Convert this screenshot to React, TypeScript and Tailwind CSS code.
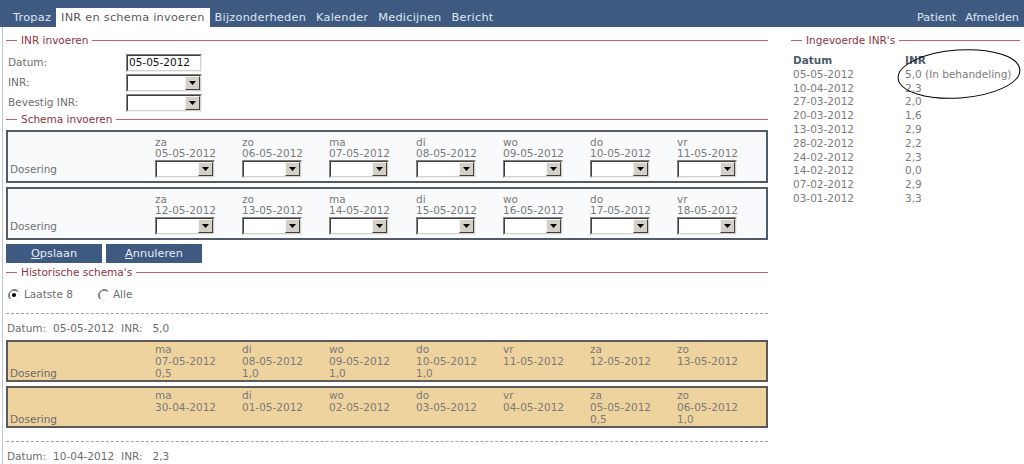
import React from 'react'

const NAV_LEFT = ['Tropaz', 'INR en schema invoeren', 'Bijzonderheden', 'Kalender', 'Medicijnen', 'Bericht']

const WEEK1 = [
  ['za', '05-05-2012'], ['zo', '06-05-2012'], ['ma', '07-05-2012'], ['di', '08-05-2012'],
  ['wo', '09-05-2012'], ['do', '10-05-2012'], ['vr', '11-05-2012'],
]
const WEEK2 = [
  ['za', '12-05-2012'], ['zo', '13-05-2012'], ['ma', '14-05-2012'], ['di', '15-05-2012'],
  ['wo', '16-05-2012'], ['do', '17-05-2012'], ['vr', '18-05-2012'],
]

const HIST1 = [
  ['ma', '07-05-2012', '0,5'], ['di', '08-05-2012', '1,0'], ['wo', '09-05-2012', '1,0'], ['do', '10-05-2012', '1,0'],
  ['vr', '11-05-2012', ''], ['za', '12-05-2012', ''], ['zo', '13-05-2012', ''],
]
const HIST2 = [
  ['ma', '30-04-2012', ''], ['di', '01-05-2012', ''], ['wo', '02-05-2012', ''], ['do', '03-05-2012', ''],
  ['vr', '04-05-2012', ''], ['za', '05-05-2012', '0,5'], ['zo', '06-05-2012', '1,0'],
]

const INRS = [
  ['05-05-2012', '5,0 (In behandeling)'], ['10-04-2012', '2,3'], ['27-03-2012', '2,0'], ['20-03-2012', '1,6'],
  ['13-03-2012', '2,9'], ['28-02-2012', '2,2'], ['24-02-2012', '2,3'], ['14-02-2012', '0,0'],
  ['07-02-2012', '2,9'], ['03-01-2012', '3,3'],
]

function Legend({ title }: { title: string }) {
  return (
    <div className="flex h-[13px] items-center">
      <div className="w-[11px] border-t border-[#b9646c]" />
      <span className="px-[4px] leading-[13px] text-[#8d3441]">{title}</span>
      <div className="flex-1 border-t border-[#b9646c]" />
    </div>
  )
}

// old windows-style combo box
function FakeSelect({ className }: { className: string }) {
  return (
    <div className={`flex h-[18px] border border-t-[#808080] border-l-[#808080] border-b-[#f0f0f0] border-r-[#f0f0f0] ${className}`}>
      <div className="flex flex-1 border border-t-[#404040] border-l-[#404040] border-b-[#d4d0c8] border-r-[#d4d0c8] bg-white">
        <div className="flex-1" />
        <div className="flex w-[15px] items-center justify-center border border-t-[#f4f4f4] border-l-[#f4f4f4] border-b-[#404040] border-r-[#404040] bg-[#d4d0c8]">
          <svg width="7" height="4" viewBox="0 0 7 4">
            <path d="M0 0h7L3.5 4z" fill="#000" />
          </svg>
        </div>
      </div>
    </div>
  )
}

function Radio({ checked }: { checked?: boolean }) {
  return (
    <svg width="12" height="12" viewBox="0 0 12 12">
      <path d="M10.2 1.8A6 6 0 0 0 1.8 10.2" fill="none" stroke="#808080" strokeWidth="1" />
      <path d="M9.5 2.5A5 5 0 0 0 2.5 9.5" fill="none" stroke="#404040" strokeWidth="1" />
      <path d="M1.8 10.2A6 6 0 0 0 10.2 1.8" fill="none" stroke="#f0f0f0" strokeWidth="1" />
      <circle cx="6" cy="6" r="4.3" fill="#fff" />
      {checked && <circle cx="6" cy="6" r="2" fill="#000" />}
    </svg>
  )
}

function SchemaBox({ days }: { days: string[][] }) {
  return (
    <div className="flex border-2 border-[#525c69] bg-[#f8fafc] pb-[3px] pt-[5px]">
      <div className="flex w-[147px] items-end pb-[3px] pl-[2px] leading-[11px] text-[#707070]">Dosering</div>
      {days.map(([d, date]) => (
        <div key={date} className="flex w-[87px] flex-col text-[#7a7a7a]">
          <div className="h-[11px] leading-[11px]">{d}</div>
          <div className="h-[11px] leading-[11px]">{date}</div>
          <FakeSelect className="mt-[1px] w-[60px]" />
        </div>
      ))}
    </div>
  )
}

function HistBox({ days }: { days: string[][] }) {
  return (
    <div className="flex border-2 border-[#5a5a5a] bg-[#efd39e] pb-[1px] pt-[1px]">
      <div className="flex w-[147px] items-end pl-[2px] leading-[12px] text-[#6a6a6a]">Dosering</div>
      {days.map(([d, date, v]) => (
        <div key={date} className="flex w-[87px] flex-col leading-[12px] text-[#7a7a7a]">
          <div className="h-[12px]">{d}</div>
          <div className="h-[12px]">{date}</div>
          <div className="h-[12px]">{v}</div>
        </div>
      ))}
    </div>
  )
}

export default function App() {
  return (
    <div className="relative h-[464px] w-[1024px] overflow-hidden bg-white font-['DejaVu_Sans',Verdana,sans-serif] text-[10.5px]">
      <div className="flex h-[27px] items-end justify-between bg-[#3e5a81] pl-[8px] text-[11.3px]">
        <div className="flex tracking-[0.25px]">
          {NAV_LEFT.map((item, i) => (
            <div
              key={item}
              className={i === 1 ? 'h-[19px] bg-white px-[5px] leading-[19px] text-[#5a5a5a]' : 'h-[19px] px-[5px] leading-[19px] text-[#dfe6ef]'}
            >
              {item}
            </div>
          ))}
        </div>
        <div className="flex text-[#dfe6ef]">
          <div className="h-[19px] px-[4px] leading-[19px]">Patient</div>
          <div className="h-[19px] px-[5px] leading-[19px]">Afmelden</div>
        </div>
      </div>

      <div className="flex">
        {/* linker kolom */}
        <div className="ml-[2px] h-[437px] w-[770px] border-l border-[#bcc6d2] pl-[3px] pr-[4px]">
          <div className="mt-[7px]">
            <Legend title="INR invoeren" />
          </div>
          <div className="mt-[5px]">
            <div className="flex h-[21px] items-center pl-[2px]">
              <span className="w-[118px] text-[#6e6e6e]">Datum:</span>
              <div className="flex h-[18px] w-[76px] items-center border border-t-[#808080] border-l-[#808080] border-b-[#f0f0f0] border-r-[#f0f0f0]">
                <div className="flex h-full flex-1 items-center border border-t-[#404040] border-l-[#404040] border-b-[#d4d0c8] border-r-[#d4d0c8] bg-white pl-[1px] text-[#111]">
                  05-05-2012
                </div>
              </div>
            </div>
            <div className="flex h-[20px] items-center pl-[2px]">
              <span className="w-[118px] text-[#6e6e6e]">INR:</span>
              <FakeSelect className="w-[76px]" />
            </div>
            <div className="flex h-[20px] items-center pl-[2px]">
              <span className="w-[118px] text-[#6e6e6e]">Bevestig INR:</span>
              <FakeSelect className="w-[76px]" />
            </div>
          </div>

          <Legend title="Schema invoeren" />
          <div className="mt-[4px]">
            <SchemaBox days={WEEK1} />
          </div>
          <div className="mt-[4px]">
            <SchemaBox days={WEEK2} />
          </div>

          <div className="mt-[4px] flex gap-[4px] text-[11.3px] text-[#e6ecf3]">
            <button className="h-[19px] w-[96px] bg-[#3e5a81] leading-[19px]">
              <span className="underline">O</span>pslaan
            </button>
            <button className="h-[19px] w-[96px] bg-[#3e5a81] leading-[19px]">
              <span className="underline">A</span>nnuleren
            </button>
          </div>

          <div className="mt-[3px]">
            <Legend title="Historische schema's" />
          </div>

          <div className="mt-[9px] flex h-[14px] items-center pl-[2px] text-[#6e6e6e]">
            <Radio checked />
            <span className="ml-[4px]">Laatste 8</span>
            <span className="ml-[25px]">
              <Radio />
            </span>
            <span className="ml-[3px]">Alle</span>
          </div>

          <div className="mt-[11px] border-t border-dashed border-[#9aa3ad]" />

          <div className="mt-[8px] flex h-[13px] items-center pl-[1px] text-[#6e6e6e]">
            <span>Datum:</span>
            <span className="ml-[7px]">05-05-2012</span>
            <span className="ml-[7px]">INR:</span>
            <span className="ml-[10px]">5,0</span>
          </div>
          <div className="mt-[5px]">
            <HistBox days={HIST1} />
          </div>
          <div className="mt-[4px]">
            <HistBox days={HIST2} />
          </div>

          <div className="mt-[13px] border-t border-dashed border-[#9aa3ad]" />

          <div className="mt-[8px] flex h-[13px] items-center pl-[1px] text-[#6e6e6e]">
            <span>Datum:</span>
            <span className="ml-[7px]">10-04-2012</span>
            <span className="ml-[7px]">INR:</span>
            <span className="ml-[10px]">2,3</span>
          </div>
        </div>

        {/* rechter kolom */}
        <div className="ml-[19px] w-[229px]">
          <div className="mt-[7px]">
            <Legend title="Ingevoerde INR's" />
          </div>
          <div className="mt-[7px] pl-[2px]">
            <div className="flex h-[13.8px] items-center font-bold text-[#4d5b6c]">
              <span className="w-[112px]">Datum</span>
              <span>INR</span>
            </div>
            {INRS.map(([d, v]) => (
              <div key={d} className="flex h-[13.8px] items-center text-[#7b7b7b]">
                <span className="w-[112px]">{d}</span>
                <span>{v}</span>
              </div>
            ))}
          </div>
        </div>
      </div>

      {/* handgetekende ovaal */}
      <svg className="pointer-events-none absolute left-[894px] top-[46px]" width="130" height="58" viewBox="0 0 130 58">
        <ellipse cx="65" cy="28" rx="61" ry="24" transform="rotate(-4 65 28)" fill="none" stroke="#000" strokeWidth="1" />
      </svg>
    </div>
  )
}
